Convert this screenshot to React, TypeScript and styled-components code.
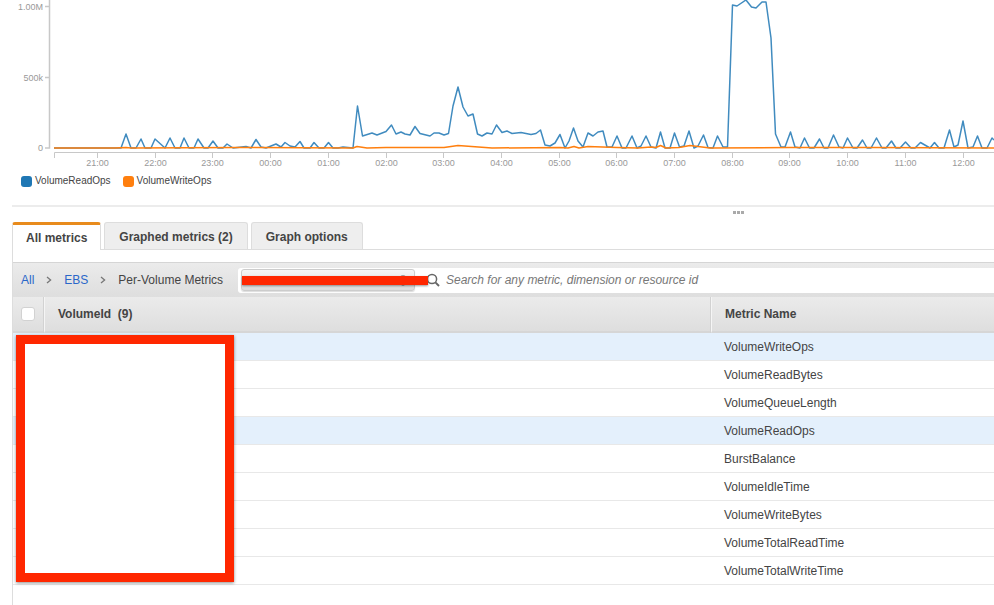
import React from "react";
import styled, { createGlobalStyle } from "styled-components";

const GlobalStyle = createGlobalStyle`
  * { box-sizing: border-box; }
  body {
    margin: 0;
    background: #fff;
    color: #444;
    font: 12px/16px "Liberation Sans", Helvetica, Arial, sans-serif;
    overflow: hidden;
  }
`;

const Page = styled.main`
  display: flex;
  flex-direction: column;
  min-height: 100vh;
`;

const Chart = styled.svg`
  display: block;
  width: 100%;
  height: auto;
  text {
    font-size: 9px;
    fill: #999;
  }
`;

const Axis = styled.path<{ $weight?: number }>`
  fill: none;
  stroke: #c8c8c8;
  stroke-width: ${(p) => p.$weight ?? 1};
`;

const Line = styled.polyline<{ $color: string; $opacity: number }>`
  fill: none;
  stroke: ${(p) => p.$color};
  stroke-width: 1.5;
  stroke-linejoin: round;
  opacity: ${(p) => p.$opacity};
`;

const Legend = styled.ul`
  display: flex;
  gap: 12px;
  list-style: none;
  margin: 0;
  padding: 2px 21px 0;
  height: 34px;
`;

const LegendItem = styled.li`
  display: flex;
  align-items: center;
  gap: 3px;
  height: 16px;
  font-size: 10px;
`;

const Swatch = styled.span<{ $color: string }>`
  width: 11px;
  height: 11px;
  border-radius: 3px;
  background: ${(p) => p.$color};
`;

const Splitter = styled.div`
  display: flex;
  justify-content: center;
  margin-left: 12px;
  padding: 4px 0 0 471px;
  height: 17px;
  border-top: 2px solid #ececec;
`;

const Grip = styled.span`
  display: flex;
  gap: 1px;
  height: 3px;
  i {
    width: 3px;
    background: #aaa;
  }
`;

const Panel = styled.section`
  flex: 1;
  margin-left: 12px;
`;

const Tabs = styled.div`
  display: flex;
  gap: 3px;
  height: 28px;
  border-bottom: 1px solid #ddd;
`;

const Tab = styled.button<{ $active?: boolean }>`
  height: ${(p) => (p.$active ? "28px" : "27px")};
  padding: ${(p) => (p.$active ? "0 13px" : "1px 14px 0")};
  border: 1px solid #ddd;
  border-top: ${(p) => (p.$active ? "3px solid #e88b1c" : "1px solid #ddd")};
  border-bottom: 0;
  border-radius: 3px 3px 0 0;
  background: ${(p) => (p.$active ? "#fff" : "#eee")};
  color: #444;
  font: bold 12px/16px "Liberation Sans", Helvetica, Arial, sans-serif;
`;

const Body = styled.div`
  min-height: calc(100vh - 249px);
  padding-top: 12px;
  border-left: 1px solid #ddd;
`;

const Toolbar = styled.div`
  display: flex;
  align-items: center;
  height: 35px;
  padding-left: 8px;
  border-top: 1px solid #d5d5d5;
  background: linear-gradient(#ebebeb, #dedede);
`;

const Crumbs = styled.nav`
  display: flex;
  align-items: center;
  gap: 12px;
  width: 217px;
  flex: none;
  a {
    color: #2a67c9;
    text-decoration: none;
  }
`;

const SearchBox = styled.div`
  display: flex;
  align-items: center;
  flex: 1;
  height: 25px;
  padding-left: 3px;
  border-radius: 3px 0 0 3px;
  background: #fff;
`;

const Filter = styled.button`
  position: relative;
  display: flex;
  align-items: center;
  justify-content: flex-end;
  width: 174px;
  height: 22px;
  flex: none;
  padding: 0 6px;
  border: 1px solid #ccc;
  border-radius: 3px;
  background: linear-gradient(#f6f6f6, #dcdcdc);
  box-shadow: 0 1px 1px #ddd;
  color: #333;
`;

const Strike = styled.span`
  position: absolute;
  z-index: 1;
  top: 6px;
  left: 0;
  width: 186px;
  height: 9px;
  background: #ff2700;
  box-shadow: 0 1px 2px rgba(0, 0, 0, 0.4);
`;

const SearchIcon = styled.svg`
  flex: none;
  margin: 0 6px 0 11px;
`;

const SearchInput = styled.input`
  flex: 1;
  min-width: 0;
  padding: 0;
  border: 0;
  outline: 0;
  background: transparent;
  font: italic 12px/16px "Liberation Sans", Helvetica, Arial, sans-serif;
  &::placeholder {
    color: #777;
    opacity: 1;
  }
`;

const TableWrap = styled.div`
  position: relative;
`;

const Table = styled.table`
  width: 100%;
  table-layout: fixed;
  border-collapse: separate;
  border-spacing: 0;
`;

const CheckCol = styled.col`
  width: 31px;
`;

const MetricCol = styled.col`
  width: 283px;
`;

const Head = styled.th<{ $tight?: boolean }>`
  height: 36px;
  padding: ${(p) => (p.$tight ? "0 0 0 8px" : "0 13px")};
  border-left: ${(p) => (p.$tight ? "0" : "1px solid #f5f5f5")};
  border-bottom: 2px solid #d6d6d6;
  background: linear-gradient(#ebebeb, #dedede);
  text-align: left;
  box-shadow: ${(p) => (p.$tight ? "none" : "-1px 0 0 #d2d2d2")};
`;

const CheckBox = styled.input`
  appearance: none;
  display: block;
  width: 14px;
  height: 14px;
  margin: 0;
  border: 1px solid #d2d2d2;
  border-radius: 3px;
  background: #fff;
`;

const Row = styled.tr<{ $selected: boolean }>`
  background: ${(p) => (p.$selected ? "#e4f0fc" : "#fff")};
`;

const Cell = styled.td`
  height: 28px;
  padding: 0 13px;
  border-bottom: 1px solid #e8e8e8;
`;

const Redaction = styled.div`
  position: absolute;
  top: 38px;
  left: 3px;
  width: 218px;
  height: 247px;
  border: 9px solid #ff2700;
  background: #fff;
  box-shadow: 0 1px 3px rgba(0, 0, 0, 0.45);
`;

const READ = "#1f77b4";
const WRITE = "#ff7f0e";

const readOps =
  "54,148 121,148 126,134 131,148 136,148 141,139 145,148 151,148 155,139 165,148 170,138 175,148 180,148 184,138 189,148 194,148 198,139 204,148 208,148 213,141 218,148 223,148 227,144 233,148 246,146.5 251,148 256,139.5 261,147 266,148 276,144 281,147 285,142.5 290,146 295,147 300,141.5 304,148 310,148 314,142.5 319,148 324,148 328.5,142.5 333,148 338,148 343,147 353,148 357.5,106 362.5,136 372,133 377,135 386,131.5 391.5,125 396,134 401,132 405,134 410,135 415,126.5 420,133.5 430,136 434,133 439,133 444,135 448.5,133.5 453,106 458,87 463,107 468,116 473,114 477.5,134 482,136 487,133 492,134 496.5,125 502,132.5 507,131 512,133.5 521,132.5 531,134.5 536,133.5 540.5,130 545,145 550,146 555,143 560,134.5 565,148 569,141 573.5,128 578,141 583,147 588,133 593,136 598,132 603,131 607,147 612,147 617,136 622,148 626,148 632,136 637,148 641,146 646,136 651,147 656,148 660.5,132 665,148 670,148 674.5,133 679.5,147 684,146 689,131 694,148 698,146 703.5,135 708,147.5 713,148 717.5,136 723,147 727.5,147 732.5,5 737,6 746,0 751.5,7 756,8 762,2 766,2 771,38 775.5,134 781,147 785,147 790.5,132 795,147 800,148 804.5,138 809.5,148 814,148 819.5,139 824,148 828,148 833.5,135 839,147 843,148 847.5,138 853,148 857,148 862.5,140 867,148 871,148 876.5,138 882,148 886,148 891.5,141 896,148 900,148 905.5,142 911,148 915,148 920.5,142.5 930,148 934.5,142.5 939,148 944,148 949.5,130 954,147 958,145 963,121 968,148 973,147 977.5,136 982,148 987,148 992,138 994,140";
const writeOps =
  "54,148 115,148 126,147.5 131,148 240,147.5 353,148 357,146.5 367,148 386,147.5 444,147.5 458,145.5 492,148 560,147.5 568,148 574,146.5 579,148 588,146.5 617,147.5 638,148 651,147 656,147.5 660.5,145.5 666,148 679,147.5 690,145.5 710,148 790,147.5 870,147.5 994,148";

const hours = [
  "21:00", "22:00", "23:00", "00:00", "01:00", "02:00", "03:00", "04:00",
  "05:00", "06:00", "07:00", "08:00", "09:00", "10:00", "11:00", "12:00",
];
const hourX = (i: number) => 97.5 + Math.round(i * 57.7);

const levels = [
  { label: "1.00M", y: 6.5 },
  { label: "500k", y: 77.5 },
  { label: "0", y: 148 },
];

const metrics = [
  { name: "VolumeWriteOps", selected: true },
  { name: "VolumeReadBytes", selected: false },
  { name: "VolumeQueueLength", selected: false },
  { name: "VolumeReadOps", selected: true },
  { name: "BurstBalance", selected: false },
  { name: "VolumeIdleTime", selected: false },
  { name: "VolumeWriteBytes", selected: false },
  { name: "VolumeTotalReadTime", selected: false },
  { name: "VolumeTotalWriteTime", selected: false },
];

function Chevron() {
  return (
    <svg width="6" height="8" viewBox="0 0 6 8" fill="none" stroke="#777" strokeWidth="1.3" aria-hidden="true">
      <path d="M1 1l3.6 3L1 7" />
    </svg>
  );
}

function MetricsChart() {
  return (
    <Chart viewBox="0 0 994 171" role="img" aria-label="Volume read and write operations over time">
      <Axis $weight={1.5} d="M49.5 0V148H45M45 6.5H49.5M45 77.5H49.5" />
      <Axis d="M54.5 158V152.5H994" />
      {levels.map((l) => (
        <text key={l.label} x="43" y={l.y + 3} textAnchor="end">{l.label}</text>
      ))}
      {hours.map((h, i) => (
        <g key={h}>
          <Axis d={`M${hourX(i)} 152V158`} />
          <text x={hourX(i)} y="166" textAnchor="middle">{h}</text>
        </g>
      ))}
      <Line $color={READ} $opacity={0.85} points={readOps} />
      <Line $color={WRITE} $opacity={1} points={writeOps} />
    </Chart>
  );
}

export default function App() {
  return (
    <>
      <GlobalStyle />
      <Page>
        <MetricsChart />
        <Legend>
          <LegendItem><Swatch $color={READ} />VolumeReadOps</LegendItem>
          <LegendItem><Swatch $color={WRITE} />VolumeWriteOps</LegendItem>
        </Legend>
        <Splitter role="separator">
          <Grip><i /><i /><i /></Grip>
        </Splitter>
        <Panel>
          <Tabs role="tablist">
            <Tab role="tab" aria-selected="true" $active>All metrics</Tab>
            <Tab role="tab" aria-selected="false">Graphed metrics (2)</Tab>
            <Tab role="tab" aria-selected="false">Graph options</Tab>
          </Tabs>
          <Body>
            <Toolbar>
              <Crumbs aria-label="Breadcrumb">
                <a href="#all">All</a>
                <Chevron />
                <a href="#ebs">EBS</a>
                <Chevron />
                <span>Per-Volume Metrics</span>
              </Crumbs>
              <SearchBox>
                <Filter aria-label="Remove filter">
                  <svg width="10" height="12" viewBox="0 0 10 12" aria-hidden="true">
                    <circle cx="5" cy="6.5" r="5" fill="#444" />
                  </svg>
                  <Strike />
                </Filter>
                <SearchIcon width="14" height="14" viewBox="0 0 14 14" fill="none" stroke="#666" aria-hidden="true">
                  <circle cx="6" cy="6" r="4.6" strokeWidth="1.5" />
                  <path d="M9.4 9.4l3.6 3.6" strokeWidth="1.9" />
                </SearchIcon>
                <SearchInput
                  type="text"
                  aria-label="Search metrics"
                  placeholder="Search for any metric, dimension or resource id"
                />
              </SearchBox>
            </Toolbar>
            <TableWrap>
              <Table>
                <colgroup>
                  <CheckCol />
                  <col />
                  <MetricCol />
                </colgroup>
                <thead>
                  <tr>
                    <Head $tight><CheckBox type="checkbox" aria-label="Select all metrics" /></Head>
                    <Head>VolumeId&nbsp; (9)</Head>
                    <Head>Metric Name</Head>
                  </tr>
                </thead>
                <tbody>
                  {metrics.map((m) => (
                    <Row key={m.name} $selected={m.selected}>
                      <Cell />
                      <Cell />
                      <Cell>{m.name}</Cell>
                    </Row>
                  ))}
                </tbody>
              </Table>
              <Redaction />
            </TableWrap>
          </Body>
        </Panel>
      </Page>
    </>
  );
}
